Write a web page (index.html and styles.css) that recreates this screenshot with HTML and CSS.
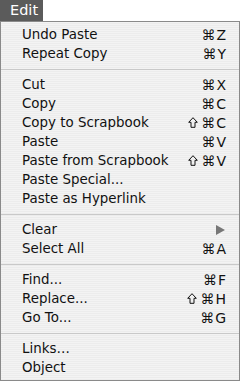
FILE: index.html
```html
<!DOCTYPE html>
<html lang="en">
<head>
  <meta charset="UTF-8" />
  <title>Edit menu</title>
  <link rel="stylesheet" href="styles.css">
</head>
<body>

  <!-- Menu title -->
  <div class="menu-bar">
    <span class="menu-title">Edit</span>
  </div>

  <!-- Dropdown -->
  <ul class="menu">
    <li class="item"><span>Undo Paste</span><span class="key">&#8984;Z</span></li>
    <li class="item"><span>Repeat Copy</span><span class="key">&#8984;Y</span></li>
    <li class="sep"></li>
    <li class="item"><span>Cut</span><span class="key">&#8984;X</span></li>
    <li class="item"><span>Copy</span><span class="key">&#8984;C</span></li>
    <li class="item"><span>Copy to Scrapbook</span><span class="key"><svg class="shift" viewBox="0 0 10 11"><path d="M5 0.7 L9.3 5.3 H7 V10.3 H3 V5.3 H0.7 Z"/></svg>&#8984;C</span></li>
    <li class="item"><span>Paste</span><span class="key">&#8984;V</span></li>
    <li class="item"><span>Paste from Scrapbook</span><span class="key"><svg class="shift" viewBox="0 0 10 11"><path d="M5 0.7 L9.3 5.3 H7 V10.3 H3 V5.3 H0.7 Z"/></svg>&#8984;V</span></li>
    <li class="item"><span>Paste Special...</span></li>
    <li class="item"><span>Paste as Hyperlink</span></li>
    <li class="sep"></li>
    <li class="item"><span>Clear</span><span class="arrow"></span></li>
    <li class="item"><span>Select All</span><span class="key">&#8984;A</span></li>
    <li class="sep"></li>
    <li class="item"><span>Find...</span><span class="key">&#8984;F</span></li>
    <li class="item"><span>Replace...</span><span class="key"><svg class="shift" viewBox="0 0 10 11"><path d="M5 0.7 L9.3 5.3 H7 V10.3 H3 V5.3 H0.7 Z"/></svg>&#8984;H</span></li>
    <li class="item"><span>Go To...</span><span class="key">&#8984;G</span></li>
    <li class="sep"></li>
    <li class="item"><span>Links…</span></li>
    <li class="item"><span>Object</span></li>
  </ul>

</body>
</html>
```

FILE: styles.css
```css
body {
  margin: 0;
  background: #fff;
  font-family: "DejaVu Sans", sans-serif;
  font-size: 13.4px;
  color: #111;
  width: 240px;
}
.menu-bar {
  height: 21px;
}
.menu-title {
  display: inline-block;
  width: 43px;
  height: 21px;
  line-height: 21px;
  padding-left: 10px;
  box-sizing: border-box;
  background: #5b5b5b;
  color: #fff;
  font-size: 14.5px;
}
.menu {
  list-style: none;
  margin: 0;
  padding: 3px 0;
  height: 360px;
  box-sizing: border-box;
  border: 1px solid #8a8a8a;
  background: repeating-linear-gradient(#f3f3f3 0 1px, #ececec 1px 2px);
}
.item {
  display: flex;
  justify-content: space-between;
  align-items: center;
  height: 19px;
  padding: 0 13px 0 21px;
}
.key {
  display: flex;
  align-items: center;
  font-size: 14px;
  letter-spacing: 1px;
  margin-right: -1px;
}
.shift {
  width: 10px;
  height: 11px;
  margin-right: 3px;
  fill: none;
  stroke: #111;
  stroke-width: 1;
}
.arrow {
  width: 0;
  height: 0;
  border-left: 9px solid #777;
  border-top: 5px solid transparent;
  border-bottom: 5px solid transparent;
  margin-right: 1px;
}
.sep {
  height: 12px;
  display: flex;
  align-items: center;
}
.sep::before {
  content: "";
  flex: 1;
  height: 1px;
  background: #c9c9c9;
}
```
